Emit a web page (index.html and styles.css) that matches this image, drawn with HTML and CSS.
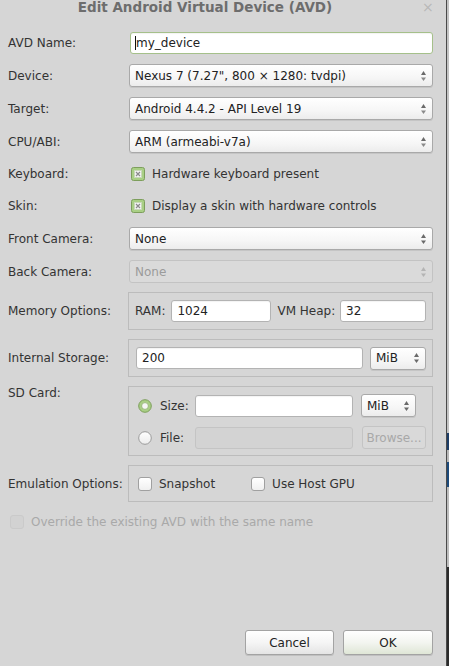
FILE: index.html
```html
<!DOCTYPE html>
<html>
<head>
<meta charset="utf-8">
<link rel="stylesheet" href="styles.css">
</head>
<body>
<div class="screen">
  <div class="dialog">
    <div class="titlebar">
      <span class="title">Edit Android Virtual Device (AVD)</span>
      <span class="close">×</span>
    </div>

    <div class="row r0 first">
      <div class="label">AVD Name:</div>
      <div class="field"><div class="input focus"><span class="caret"></span>my_device</div></div>
    </div>
    <div class="row r10">
      <div class="label">Device:</div>
      <div class="field"><div class="combo"><span>Nexus 7 (7.27", 800 × 1280: tvdpi)</span><svg class="arr" width="7" height="12" viewBox="0 0 7 12"><path d="M3.5 1 L6 5 L1 5 Z" fill="#6a6a6a"/><path d="M1 7.5 L6 7.5 L3.5 11 Z" fill="#8a8a8a"/></svg></div></div>
    </div>
    <div class="row r10">
      <div class="label">Target:</div>
      <div class="field"><div class="combo"><span>Android 4.4.2 - API Level 19</span><svg class="arr" width="7" height="12" viewBox="0 0 7 12"><path d="M3.5 1 L6 5 L1 5 Z" fill="#6a6a6a"/><path d="M1 7.5 L6 7.5 L3.5 11 Z" fill="#8a8a8a"/></svg></div></div>
    </div>
    <div class="row r10">
      <div class="label">CPU/ABI:</div>
      <div class="field"><div class="combo"><span>ARM (armeabi-v7a)</span><svg class="arr" width="7" height="12" viewBox="0 0 7 12"><path d="M3.5 1 L6 5 L1 5 Z" fill="#6a6a6a"/><path d="M1 7.5 L6 7.5 L3.5 11 Z" fill="#8a8a8a"/></svg></div></div>
    </div>
    <div class="row r9">
      <div class="label">Keyboard:</div>
      <div class="field check-field">
        <svg class="cb" width="14" height="14" viewBox="0 0 14 14"><rect x="0.5" y="0.5" width="13" height="13" rx="2" fill="#a9cf85" stroke="#7d9e5c"/><rect x="3.5" y="3.5" width="7" height="7" fill="#f4f4f4" stroke="#c9d9b9"/><path d="M5 5 L9 9 M9 5 L5 9" stroke="#8a8a8a" stroke-width="1.2"/></svg>
        <span class="ctext">Hardware keyboard present</span>
      </div>
    </div>
    <div class="row r9">
      <div class="label">Skin:</div>
      <div class="field check-field">
        <svg class="cb" width="14" height="14" viewBox="0 0 14 14"><rect x="0.5" y="0.5" width="13" height="13" rx="2" fill="#a9cf85" stroke="#7d9e5c"/><rect x="3.5" y="3.5" width="7" height="7" fill="#f4f4f4" stroke="#c9d9b9"/><path d="M5 5 L9 9 M9 5 L5 9" stroke="#8a8a8a" stroke-width="1.2"/></svg>
        <span class="ctext">Display a skin with hardware controls</span>
      </div>
    </div>
    <div class="row r10">
      <div class="label">Front Camera:</div>
      <div class="field"><div class="combo"><span>None</span><svg class="arr" width="7" height="12" viewBox="0 0 7 12"><path d="M3.5 1 L6 5 L1 5 Z" fill="#6a6a6a"/><path d="M1 7.5 L6 7.5 L3.5 11 Z" fill="#6a6a6a"/></svg></div></div>
    </div>
    <div class="row r10">
      <div class="label">Back Camera:</div>
      <div class="field"><div class="combo disabled"><span>None</span><svg class="arr" width="7" height="12" viewBox="0 0 7 12"><path d="M3.5 1 L6 5 L1 5 Z" fill="#b4b4b4"/><path d="M1 7.5 L6 7.5 L3.5 11 Z" fill="#b4b4b4"/></svg></div></div>
    </div>

    <div class="row r9 grow">
      <div class="label">Memory Options:</div>
      <div class="field">
        <div class="group mem">
          <span class="glabel">RAM:</span>
          <div class="input ram">1024</div>
          <span class="glabel heap">VM Heap:</span>
          <div class="input heapin">32</div>
        </div>
      </div>
    </div>

    <div class="row r9 grow">
      <div class="label">Internal Storage:</div>
      <div class="field">
        <div class="group storage">
          <div class="input stin">200</div>
          <div class="combo unit"><span>MiB</span><svg class="arr" width="7" height="12" viewBox="0 0 7 12"><path d="M3.5 1 L6 5 L1 5 Z" fill="#6a6a6a"/><path d="M1 7.5 L6 7.5 L3.5 11 Z" fill="#6a6a6a"/></svg></div>
        </div>
      </div>
    </div>

    <div class="row r9 grow top">
      <div class="label sdlabel">SD Card:</div>
      <div class="field">
        <div class="group sd">
          <div class="sdrow">
            <svg class="radio" width="14" height="14" viewBox="0 0 14 14"><circle cx="7" cy="7" r="6.3" fill="#a9cf85" stroke="#7d9e5c"/><circle cx="7" cy="7" r="3.4" fill="#f6f6f6" stroke="#8fae6e" stroke-width="0.8"/></svg>
            <span class="rtext">Size:</span>
            <div class="input sdin"></div>
            <div class="combo unit sdunit"><span>MiB</span><svg class="arr" width="7" height="12" viewBox="0 0 7 12"><path d="M3.5 1 L6 5 L1 5 Z" fill="#6a6a6a"/><path d="M1 7.5 L6 7.5 L3.5 11 Z" fill="#6a6a6a"/></svg></div>
          </div>
          <div class="sdrow">
            <svg class="radio" width="14" height="14" viewBox="0 0 14 14"><defs><linearGradient id="rg" x1="0" y1="0" x2="0" y2="1"><stop offset="0" stop-color="#ffffff"/><stop offset="1" stop-color="#ececec"/></linearGradient></defs><circle cx="7" cy="7" r="6.3" fill="url(#rg)" stroke="#9a9a9a"/></svg>
            <span class="rtext">File:</span>
            <div class="input sdin dis"></div>
            <div class="btn browse">Browse...</div>
          </div>
        </div>
      </div>
    </div>

    <div class="row r9 grow">
      <div class="label">Emulation Options:</div>
      <div class="field">
        <div class="group emu">
          <span class="ucb"></span><span class="etext">Snapshot</span>
          <span class="ucb gpu"></span><span class="etext">Use Host GPU</span>
        </div>
      </div>
    </div>

    <div class="row r10 override">
      <span class="ucb dcb"></span><span class="otext">Override the existing AVD with the same name</span>
    </div>

    <div class="buttons">
      <div class="btn push">Cancel</div>
      <div class="btn push ok">OK</div>
    </div>
  </div>
  <div class="edge">
    <div class="edge-line"></div>
    <div class="edge-strip">
      <div class="es-top"></div>
      <div class="es-blue1"></div>
      <div class="es-mid"></div>
      <div class="es-blue2"></div>
      <div class="es-mid2"></div>
      <div class="es-dark"></div>
    </div>
  </div>
</div>
</body>
</html>
```

FILE: styles.css
```css
html, body {
  margin: 0;
  padding: 0;
}
body {
  width: 449px;
  height: 666px;
  overflow: hidden;
  background: #d6d6d6;
  font-family: "DejaVu Sans", sans-serif;
  font-size: 12px;
  color: #333333;
}
.screen {
  display: flex;
  width: 449px;
  height: 666px;
}
.dialog {
  width: 446px;
  height: 666px;
  flex: none;
  box-sizing: border-box;
  padding: 0 14px 11px 8px;
  display: flex;
  flex-direction: column;
  background: #d6d6d6;
  white-space: nowrap;
}
.titlebar {
  height: 32px;
  flex: none;
  display: flex;
  align-items: flex-start;
  justify-content: center;
  margin: 0 -14px 0 -8px;
}
.title {
  font-weight: bold;
  font-size: 13.5px;
  color: #6d6d6d;
  line-height: 14px;
  margin-left: -36px;
}
.close {
  position: absolute;
  left: 422px;
  top: -1px;
  font-size: 14px;
  color: #b8b8b8;
  line-height: 16px;
}
.row {
  display: flex;
  align-items: center;
  height: 23px;
  flex: none;
}
.row.first { height: 22px; }
.r0 { margin-top: 0; }
.r9 { margin-top: 9px; }
.r10 { margin-top: 10px; }
.row.grow { height: auto; }
.row.top { align-items: flex-start; }
.label {
  width: 120px;
  flex: none;
  color: #333333;
}
.sdlabel { line-height: 14px; }
.field {
  flex: 1;
  min-width: 0;
  display: flex;
  align-items: center;
}
.input {
  box-sizing: border-box;
  height: 22px;
  flex: none;
  background: #ffffff;
  border: 1px solid #b3b3b3;
  border-radius: 3px;
  padding: 0 5px;
  line-height: 20px;
  color: #222222;
  box-shadow: inset 0 1px 1px rgba(0,0,0,0.05);
}
.field > .input { flex: 1; margin-left: 2px; margin-right: -1px; }
.input.focus {
  border-color: #a5c08a;
  padding-left: 4px;
  display: flex;
  align-items: center;
}
.caret {
  display: inline-block;
  width: 1px;
  height: 14px;
  background: #111111;
}
.combo {
  box-sizing: border-box;
  flex: 1;
  height: 23px;
  margin-left: 1px;
  margin-right: -1px;
  display: flex;
  align-items: center;
  justify-content: space-between;
  padding: 0 5px 0 5px;
  border: 1px solid #a9a9a9;
  border-radius: 3px;
  background: linear-gradient(#ffffff, #f6f6f6 60%, #ececec);
  box-shadow: 0 1px 0 rgba(0,0,0,0.08);
  color: #222222;
}
.combo .arr { flex: none; }
.combo.disabled {
  background: #dadada;
  border-color: #c3c3c3;
  color: #9b9b9b;
  box-shadow: none;
}
.check-field { padding-left: 3px; }
.cb { flex: none; }
.ctext { margin-left: 7px; }
.row.grow .field { align-self: stretch; }
.group {
  flex: 1;
  min-width: 0;
  box-sizing: border-box;
  border: 1px solid #bcbcbc;
  margin-right: -1px;
  display: flex;
  align-items: center;
  overflow: hidden;
}
.mem {
  height: 38px;
  padding: 0 6px 0 6px;
}
.glabel { color: #333333; flex: none; }
.ram { width: 100px; margin-left: 6px; }
.heap { margin-left: 6px; }
.heapin { width: 86px; margin-left: auto; }
.storage {
  height: 38px;
  padding: 0 6px 0 7px;
}
.stin { width: 227px; }
.unit {
  flex: none;
  width: 56px;
  margin-left: 7px;
  margin-right: 0;
  height: 23px;
  padding-left: 5px;
}
.sd {
  height: 70px;
  flex-direction: column;
  align-items: stretch;
  padding: 7px 7px 0 9px;
}
.sdrow {
  display: flex;
  align-items: center;
  height: 23px;
}
.sdrow + .sdrow { margin-top: 9px; }
.radio { flex: none; }
.rtext { width: 35px; margin-left: 8px; flex: none; }
.sdin { width: 158px; }
.sdin.dis { background: #d3d3d3; border-color: #c4c4c4; box-shadow: none; }
.sdunit { width: 55px; margin-left: 8px; }
.btn {
  box-sizing: border-box;
  border: 1px solid #a3a3a3;
  border-radius: 3px;
  background: linear-gradient(#ffffff, #f5f5f5 50%, #e4e4e4);
  display: flex;
  align-items: center;
  justify-content: center;
  color: #222222;
  flex: none;
}
.browse {
  width: 64px;
  height: 23px;
  margin-left: 9px;
  background: #d9d9d9;
  border-color: #c4c4c4;
  color: #a8a8a8;
}
.emu {
  height: 37px;
  padding-left: 9px;
}
.ucb {
  display: inline-block;
  box-sizing: border-box;
  width: 14px;
  height: 14px;
  border: 1px solid #a0a0a0;
  border-radius: 3px;
  background: linear-gradient(#ffffff, #f0f0f0);
  flex: none;
}
.etext { margin-left: 7px; }
.gpu { margin-left: 36px; }
.override {
  padding-left: 2px;
  height: 20px;
}
.dcb {
  background: #d2d2d2;
  border-color: #cacaca;
}
.otext { margin-left: 7px; color: #a9a9a9; }
.buttons {
  margin-top: auto;
  display: flex;
  justify-content: flex-end;
  gap: 9px;
  margin-right: -1px;
}
.push {
  width: 89px;
  height: 25px;
  box-shadow: 0 1px 0 rgba(0,0,0,0.1);
}
.ok {
  width: 90px;
  background: linear-gradient(#ffffff, #f3f5f0 50%, #dfe6d6);
}
.edge {
  display: flex;
  width: 3px;
  height: 666px;
  flex: none;
}
.edge-line {
  width: 1px;
  background: #4a4a4a;
}
.edge-strip {
  width: 2px;
  display: flex;
  flex-direction: column;
}
.es-top { height: 433px; background: #c4c4c4; }
.es-blue1 { height: 17px; background: #1d3d66; }
.es-mid { height: 12px; background: #b8b8b8; }
.es-blue2 { height: 25px; background: #1d4a7a; }
.es-mid2 { height: 80px; background: #bdbdbd; }
.es-dark { flex: 1; background: #2b2b2b; }
```
